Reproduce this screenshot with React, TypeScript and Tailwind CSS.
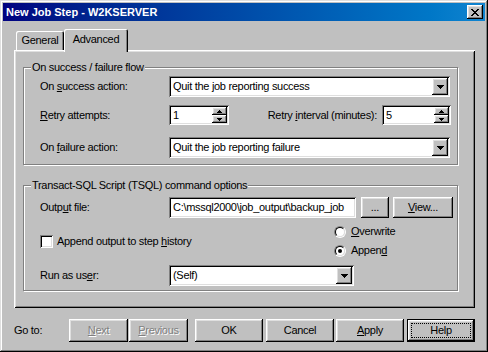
import React from "react";

const raised =
  "shadow-[inset_-1px_-1px_#000000,inset_1px_1px_#ffffff,inset_-2px_-2px_#808080,inset_2px_2px_#dfdfdf]";
const sunken =
  "shadow-[inset_1px_1px_#808080,inset_-1px_-1px_#ffffff,inset_2px_2px_#000000,inset_-2px_-2px_#dfdfdf]";

function DownArrow() {
  return (
    <svg width="7" height="4" viewBox="0 0 7 4" shapeRendering="crispEdges">
      <rect x="0" y="0" width="7" height="1" fill="#000" />
      <rect x="1" y="1" width="5" height="1" fill="#000" />
      <rect x="2" y="2" width="3" height="1" fill="#000" />
      <rect x="3" y="3" width="1" height="1" fill="#000" />
    </svg>
  );
}

function SmallArrow({ up }: { up?: boolean }) {
  return (
    <svg width="5" height="3" viewBox="0 0 5 3" shapeRendering="crispEdges">
      {up ? (
        <>
          <rect x="2" y="0" width="1" height="1" fill="#000" />
          <rect x="1" y="1" width="3" height="1" fill="#000" />
          <rect x="0" y="2" width="5" height="1" fill="#000" />
        </>
      ) : (
        <>
          <rect x="0" y="0" width="5" height="1" fill="#000" />
          <rect x="1" y="1" width="3" height="1" fill="#000" />
          <rect x="2" y="2" width="1" height="1" fill="#000" />
        </>
      )}
    </svg>
  );
}

function Combo({ value, width }: { value: string; width: string }) {
  return (
    <div className={`flex h-[21px] ${width} bg-white p-[2px] ${sunken}`}>
      <div className="flex-1 overflow-hidden whitespace-nowrap pl-[2px] leading-[17px]">{value}</div>
      <div className={`flex h-[17px] w-[16px] items-center justify-center bg-[#c0c0c0] ${raised}`}>
        <DownArrow />
      </div>
    </div>
  );
}

function Spin({ value, width }: { value: string; width: string }) {
  return (
    <div className={`flex h-[20px] ${width} bg-white p-[2px] ${sunken}`}>
      <div className="flex-1 pl-[2px] leading-[16px]">{value}</div>
      <div className="flex w-[15px] flex-col">
        <div className={`flex h-[8px] items-center justify-center bg-[#c0c0c0] ${raised}`}>
          <SmallArrow up />
        </div>
        <div className={`flex h-[8px] items-center justify-center bg-[#c0c0c0] ${raised}`}>
          <SmallArrow />
        </div>
      </div>
    </div>
  );
}

function Group({ title, children, className }: { title: string; children: React.ReactNode; className?: string }) {
  return (
    <div
      className={`relative w-[435px] border border-[#808080] shadow-[inset_1px_1px_#ffffff,1px_1px_#ffffff] ${className ?? ""}`}
    >
      <div className="absolute -top-[8px] left-[7px] bg-[#c0c0c0] px-[1px] leading-[14px]">{title}</div>
      {children}
    </div>
  );
}

function Radio({ checked }: { checked?: boolean }) {
  return (
    <div className="h-[12px] w-[12px] rounded-full border border-b-white border-l-[#808080] border-r-white border-t-[#808080]">
      <div className="flex h-full w-full items-center justify-center rounded-full border border-b-[#dfdfdf] border-l-black border-r-[#dfdfdf] border-t-black bg-white">
        {checked && <div className="h-[4px] w-[4px] rounded-full bg-black" />}
      </div>
    </div>
  );
}

function Btn({ children, className, disabled }: { children: React.ReactNode; className?: string; disabled?: boolean }) {
  return (
    <div
      className={`flex items-center justify-center bg-[#c0c0c0] ${raised} ${
        disabled ? "text-[#808080] [text-shadow:1px_1px_0_#ffffff]" : ""
      } ${className ?? ""}`}
    >
      {children}
    </div>
  );
}

export default function App() {
  return (
    <div
      className="flex h-[352px] w-[488px] flex-col bg-[#c0c0c0] p-[3px] font-['Liberation_Sans',Arial,sans-serif] text-[11px] leading-[13px] tracking-[-0.3px] text-black shadow-[inset_-1px_-1px_#000000,inset_1px_1px_#dfdfdf,inset_-2px_-2px_#808080,inset_2px_2px_#ffffff]"
    >
      {/* title bar */}
      <div className="flex h-[18px] items-center justify-between bg-gradient-to-r from-[#000080] to-[#1084d0] pl-[3px] pr-[2px]">
        <span className="font-bold tracking-normal text-white">New Job Step - W2KSERVER</span>
        <div className={`flex h-[14px] w-[16px] items-center justify-center bg-[#c0c0c0] ${raised}`}>
          <svg width="8" height="7" viewBox="0 0 8 7" shapeRendering="crispEdges">
            <path d="M0 0h2v1h-2zM6 0h2v1h-2zM1 1h2v1h-2zM5 1h2v1h-2zM2 2h4v1h-4zM3 3h2v1h-2zM2 4h4v1h-4zM1 5h2v1h-2zM5 5h2v1h-2zM0 6h2v1h-2zM6 6h2v1h-2z" fill="#000" />
          </svg>
        </div>
      </div>

      <div className="ml-[11px] mt-[8px] flex flex-col">
        {/* tabs */}
        <div className="flex h-[21px] items-end pl-[2px]">
          <div className="flex h-[19px] w-[48px] items-center justify-center rounded-t-[2px] shadow-[inset_1px_1px_#ffffff,inset_-1px_0_#000000,inset_-2px_0_#808080]">
            General
          </div>
          <div className="relative z-10 -mb-[2px] flex h-[23px] w-[64px] items-start justify-center rounded-t-[2px] bg-[#c0c0c0] pt-[4px] shadow-[inset_1px_1px_#ffffff,inset_-1px_0_#000000,inset_-2px_0_#808080]">
            Advanced
          </div>
        </div>

        {/* panel */}
        <div className="flex h-[258px] w-[461px] flex-col pl-[9px] pt-[17px] shadow-[inset_1px_1px_#ffffff,inset_-1px_-1px_#000000,inset_2px_2px_#dfdfdf,inset_-2px_-2px_#808080]">
          <Group title="On success / failure flow">
            <div className="flex flex-col pb-[6px] pl-[16px] pt-[8px]">
              <div className="flex items-center">
                <span className="w-[129px]">
                  On <u>s</u>uccess action:
                </span>
                <Combo value="Quit the job reporting success" width="w-[281px]" />
              </div>
              <div className="mt-[8px] flex items-center">
                <span className="w-[129px]">
                  <u>R</u>etry attempts:
                </span>
                <Spin value="1" width="w-[60px]" />
                <span className="w-[153px] pr-[5px] text-right">
                  Retry <u>i</u>nterval (minutes):
                </span>
                <Spin value="5" width="w-[69px]" />
              </div>
              <div className="mt-[12px] flex items-center">
                <span className="w-[129px]">
                  On <u>f</u>ailure action:
                </span>
                <Combo value="Quit the job reporting failure" width="w-[281px]" />
              </div>
            </div>
          </Group>

          <Group title="Transact-SQL Script (TSQL) command options" className="mt-[20px]">
            <div className="flex flex-col pb-[4px] pl-[16px] pt-[11px]">
              <div className="flex items-center">
                <span className="w-[129px]">
                  Outp<u>u</u>t file:
                </span>
                <div className={`h-[21px] w-[187px] overflow-hidden whitespace-nowrap bg-white p-[2px] pl-[4px] leading-[17px] ${sunken}`}>
                  C:\mssql2000\job_output\backup_job
                </div>
                <Btn className="ml-[5px] h-[21px] w-[28px]">...</Btn>
                <Btn className="ml-[4px] h-[21px] w-[60px]">
                  <span>
                    <u>V</u>iew...
                  </span>
                </Btn>
              </div>

              <div className="mt-[8px] flex h-[30px] items-center">
                <div className="flex w-[294px] items-center">
                  <div className={`h-[13px] w-[13px] bg-white ${sunken}`} />
                  <span className="ml-[4px]">
                    Append output to step <u>h</u>istory
                  </span>
                </div>
                <div className="flex flex-col gap-[6px]">
                  <div className="flex items-center">
                    <Radio />
                    <span className="ml-[5px]">
                      <u>O</u>verwrite
                    </span>
                  </div>
                  <div className="flex items-center">
                    <Radio checked />
                    <span className="ml-[5px]">
                      Appen<u>d</u>
                    </span>
                  </div>
                </div>
              </div>

              <div className="mt-[9px] flex items-center">
                <span className="w-[129px]">
                  Run as us<u>e</u>r:
                </span>
                <Combo value="(Self)" width="w-[185px]" />
              </div>
            </div>
          </Group>
        </div>

        {/* bottom buttons */}
        <div className="mt-[11px] flex h-[23px] items-center">
          <span className="w-[55px]">Go to:</span>
          <Btn disabled className="h-[23px] w-[59px]">
            <span>
              <u>N</u>ext
            </span>
          </Btn>
          <Btn disabled className="ml-[1px] h-[23px] w-[59px]">
            <span>
              <u>P</u>revious
            </span>
          </Btn>
          <Btn className="ml-[7px] h-[23px] w-[68px]">OK</Btn>
          <Btn className="ml-[3px] h-[23px] w-[68px]">Cancel</Btn>
          <Btn className="ml-[2px] h-[23px] w-[68px]">
            <span>
              <u>A</u>pply
            </span>
          </Btn>
          <div className="ml-[3px] h-[23px] w-[68px] border border-black">
            <div className={`h-full w-full bg-[#c0c0c0] p-[3px] ${raised}`}>
              <div className="flex h-full w-full items-center justify-center border border-dotted border-black">
                Help
              </div>
            </div>
          </div>
        </div>
      </div>
    </div>
  );
}
